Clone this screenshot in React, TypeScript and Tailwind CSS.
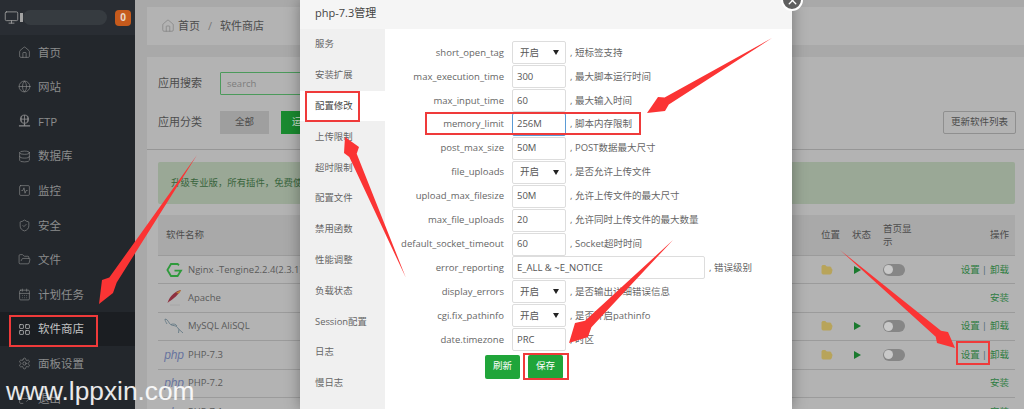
import React from "react";
import { House, Globe, Database, SquareActivity, ShieldCheck, FolderOpen, CalendarDays, LayoutGrid, Settings, LogOut, Monitor, X } from "lucide-react";

const FtpIcon = () => (
  <svg width="14" height="14" viewBox="0 0 14 14" fill="none" stroke="currentColor" strokeWidth="0.9">
    <circle cx="7" cy="5" r="4.4" />
    <path d="M2.6 5h8.8M7 .6v8.8M4.2 1.600C3.400 4 3.400 6.200 4.200 8.600M9.800 1.600c.8 2.400.8 4.600 0 7" />
    <path d="M7 9.500v2.200M1 12.200h12" strokeWidth="1.4" />
  </svg>
);

const navItems: [string, React.ReactNode][] = [
  ["首页", <House size={13} strokeWidth={1.2} />],
  ["网站", <Globe size={13} strokeWidth={1.2} />],
  ["FTP", <FtpIcon />],
  ["数据库", <Database size={13} strokeWidth={1.2} />],
  ["监控", <SquareActivity size={13} strokeWidth={1.2} />],
  ["安全", <ShieldCheck size={13} strokeWidth={1.2} />],
  ["文件", <FolderOpen size={13} strokeWidth={1.2} />],
  ["计划任务", <CalendarDays size={13} strokeWidth={1.2} />],
  ["软件商店", <LayoutGrid size={13} strokeWidth={1.4} />],
  ["面板设置", <Settings size={13} strokeWidth={1.2} />],
  ["退出", <LogOut size={13} strokeWidth={1.2} />],
];

const tabs = ["服务", "安装扩展", "配置修改", "上传限制", "超时限制", "配置文件", "禁用函数", "性能调整", "负载状态", "Session配置", "日志", "慢日志"];

type Row = { label: string; value: string; note: string; select?: boolean; wide?: boolean; active?: boolean };
const rows: Row[] = [
  { label: "short_open_tag", value: "开启", note: ", 短标签支持", select: true },
  { label: "max_execution_time", value: "300", note: ", 最大脚本运行时间" },
  { label: "max_input_time", value: "60", note: ", 最大输入时间" },
  { label: "memory_limit", value: "256M", note: ", 脚本内存限制", active: true },
  { label: "post_max_size", value: "50M", note: ", POST数据最大尺寸" },
  { label: "file_uploads", value: "开启", note: ", 是否允许上传文件", select: true },
  { label: "upload_max_filesize", value: "50M", note: ", 允许上传文件的最大尺寸" },
  { label: "max_file_uploads", value: "20", note: ", 允许同时上传文件的最大数量" },
  { label: "default_socket_timeout", value: "60", note: ", Socket超时时间" },
  { label: "error_reporting", value: "E_ALL & ~E_NOTICE", note: ", 错误级别", wide: true },
  { label: "display_errors", value: "开启", note: ", 是否输出详细错误信息", select: true },
  { label: "cgi.fix_pathinfo", value: "开启", note: ", 是否开启pathinfo", select: true },
  { label: "date.timezone", value: "PRC", note: ", 时区" },
];

const NginxLogo = () => (
  <svg width="17" height="14" viewBox="0 0 17 14" fill="none" stroke="#2f9a3c" strokeWidth="1.8">
    <path d="M13 2.200 11.600 1H5L1.400 7 5 13h6.600L15 7.600H8.500" />
  </svg>
);
const ApacheLogo = () => (
  <svg width="17" height="18" viewBox="0 0 17 18" fill="none">
    <path d="M15 1C10 2 4 6 1.500 14 5 11 11 8 15 1Z" fill="#8e2f3e" />
    <path d="M15 1c-2 1-3.500 1.700-5 3l3 .5C14 3.500 14.500 2.300 15 1Z" fill="#b8813a" />
    <path d="M4 16h10" stroke="#a3a3a3" strokeWidth="0.8" />
  </svg>
);
const MysqlLogo = () => (
  <svg width="20" height="16" viewBox="0 0 20 16" fill="none" stroke="#5d7480" strokeWidth="0.8">
    <path d="M1 1c3 0 3.500 4 5.500 5.500S12 7 13.500 9.500 16 12 19 15M1 1c0 2 1 3 2 5M7 6.500C9 5.500 12 6 13 8M15 11l-.5 4" />
  </svg>
);
const PhpLogo = () => (
  <span className="font-['Liberation_Sans',sans-serif] italic text-[12px] leading-none tracking-[-0.2px] text-[#68739f]">php</span>
);

type Soft = { icon: React.ReactNode; name: string; on: boolean };
const software: Soft[] = [
  { icon: <NginxLogo />, name: "Nginx -Tengine2.2.4(2.3.1)", on: true },
  { icon: <ApacheLogo />, name: "Apache", on: false },
  { icon: <MysqlLogo />, name: "MySQL AliSQL", on: true },
  { icon: <PhpLogo />, name: "PHP-7.3", on: true },
  { icon: <PhpLogo />, name: "PHP-7.2", on: false },
  { icon: <PhpLogo />, name: "PHP-7.1", on: false },
];

const arrows = [
  "197,155 116.700,282.500 113,293 99,304 102,280 109.300,277.500",
  "406,278 356.700,153.800 359,147 345,137 344,153 349.300,157",
  "772,38 664.600,97.600 658,97 647,113 665,111 668.800,104.400",
  "673,240 591.400,327.200 588,337 569,343 575,323 585,320.800",
  "840,250 941,330.700 948,332 955,348 937,343 935.700,336.700",
];

const redBoxes = [
  "left-[9px] top-[315px] w-[89px] h-[32px]",
  "left-[305px] top-[91px] w-[55px] h-[31px]",
  "left-[425px] top-[112px] w-[216px] h-[23px]",
  "left-[523px] top-[353px] w-[46px] h-[27px]",
  "left-[956px] top-[341px] w-[34px] h-[24px]",
];

export default function App() {
  return (
    <div className="relative flex h-[409px] w-[1024px] overflow-hidden bg-[#a9a9a9] text-[11px] font-['Open_Sans','Noto_Sans_CJK_SC',sans-serif]">
      {/* Sidebar */}
      <aside className="flex w-[135px] shrink-0 flex-col bg-[#23272c] text-[#8b8c8d]">
        <div className="flex h-[35px] shrink-0 items-center bg-[#292d33] pl-[4px]">
          <Monitor size={15} strokeWidth={1.3} className="shrink-0 text-[#a3a3a3]" />
          <span className="ml-[1px] h-[9px] w-[3px] bg-[#a3a3a3]" />
          <span className="h-[15px] w-[84px] rounded-full bg-[#363b40]" />
          <span className="ml-[8px] flex h-[16px] w-[16px] items-center justify-center rounded-[4px] bg-[#c65a1c] text-[10px] font-bold text-[#e8d5c5]">0</span>
        </div>
        {navItems.map(([name, icon]) => (
          <div key={name} className={`flex h-[34.6px] shrink-0 items-center gap-[7px] pl-[18px] text-[11.5px] ${name === "软件商店" ? "bg-[#1b1e22] text-[#c2c2c2]" : ""}`}>
            <span className="flex w-[13px] justify-center">{icon}</span>
            <span>{name}</span>
          </div>
        ))}
      </aside>

      {/* Main */}
      <main className="flex min-w-0 flex-1 flex-col pl-[12px] pt-[7px] text-[#4c4c4c]">
        <div className="flex h-[38px] shrink-0 items-center bg-[#b3b3b3] pl-[14px] text-[11px]">
          <House size={14} strokeWidth={1.2} className="text-[#7f7f7f]" />
          <span className="ml-[3px]">首页</span>
          <span className="mx-[8px] text-[#777]">/</span>
          <span>软件商店</span>
        </div>

        <section className="mt-[12px] flex min-h-0 flex-1 flex-col bg-[#b3b3b3] pt-[15px]">
          <div className="flex h-[23px] shrink-0 items-center pl-[11px]">
            <span className="w-[62px]">应用搜索</span>
            <input readOnly placeholder="search" className="h-[23px] w-[250px] rounded-[1px] border border-[#4b9a5b] bg-[#b3b3b3] px-[6px] text-[9.5px] placeholder:text-[#7c7c7c]" />
          </div>
          <div className="mt-[16px] flex h-[23px] shrink-0 items-center pl-[11px] pr-[8px]">
            <span className="w-[62px]">应用分类</span>
            <span className="flex h-[23px] w-[49px] items-center justify-center bg-[#9f9f9f] text-[9.5px]">全部</span>
            <span className="ml-[12px] flex h-[23px] w-[60px] items-center justify-center bg-[#1a8a30] text-[9.5px] text-[#cfe0d0]">运行环境</span>
            <button className="ml-auto flex h-[23px] w-[73px] items-center justify-center rounded-[2px] border border-[#8f8f8f] text-[9.5px]">更新软件列表</button>
          </div>
          <div className="mt-[15px] h-px shrink-0 bg-[#969696]" />
          <div className="ml-[11px] mr-[9px] mt-[12px] flex h-[42px] shrink-0 items-center rounded-[2px] bg-[#9aa896] pl-[13px] text-[9.4px] text-[#38643c]">
            升级专业版，所有插件，免费使用
          </div>
          <div className="ml-[11px] mr-[9px] mt-[11px] flex flex-col">
            <div className="flex h-[41px] shrink-0 items-center border-b border-[#9b9b9b] bg-[#a9a9a9] text-[9.5px] text-[#4d4d4d]">
              <span className="flex-1 pl-[8px]">软件名称</span>
              <span className="w-[31px]">位置</span>
              <span className="w-[31px]">状态</span>
              <span className="w-[32px] leading-[13px]">首页显示</span>
              <span className="w-[100px] pr-[6px] text-right">操作</span>
            </div>
            {software.map((s) => (
              <div key={s.name} className="flex h-[28.4px] shrink-0 items-center border-b border-[#9b9b9b] text-[9.5px]">
                <span className="flex w-[30px] shrink-0 items-center justify-center pl-[2px]">{s.icon}</span>
                <span className="flex-1 text-[#5a5a5a]">{s.name}</span>
                {s.on ? (
                  <>
                    <span className="w-[31px]"><FolderOpen size={12} fill="#b8a45a" stroke="#b8a45a" /></span>
                    <span className="w-[31px] pl-[2px]">
                      <span className="block h-0 w-0 border-y-[4px] border-l-[7px] border-y-transparent border-l-[#1a7a2e]" />
                    </span>
                    <span className="w-[32px]">
                      <span className="flex h-[12px] w-[22px] items-center rounded-full bg-[#868686] pl-[1px]">
                        <span className="h-[9px] w-[9px] rounded-full bg-[#c9c9c9]" />
                      </span>
                    </span>
                  </>
                ) : null}
                <span className="w-[100px] pr-[6px] text-right text-[#2f7d42]">
                  {s.on ? <>设置<span className="ml-[2px] mr-[3px] text-[#4d6a70]">|</span>卸载</> : "安装"}
                </span>
              </div>
            ))}
          </div>
        </section>
      </main>

      {/* Modal */}
      <div className="absolute bottom-0 left-[300px] top-0 flex w-[492px] flex-col bg-white shadow-[0_0_14px_rgba(0,0,0,0.35)]">
        <div className="flex h-[29px] shrink-0 items-center bg-[#f5f5f5] pb-[3px] pl-[15px] text-[11px] text-[#444]">php-7.3管理</div>
        <div className="flex min-h-0 flex-1">
          <nav className="w-[85px] shrink-0 bg-[#f0f0f0] text-[9.4px] text-[#666]">
            {tabs.map((t) => (
              <div key={t} className={`flex h-[30.8px] items-center pl-[15px] ${t === "配置修改" ? "bg-white text-[#444]" : ""}`}>{t}</div>
            ))}
          </nav>
          <div className="flex flex-col pt-[12px] text-[#666]">
            {rows.map((r) => (
              <div key={r.label} className="flex h-[23.9px] items-center text-[9.5px]">
                <label className="w-[119px] whitespace-nowrap text-right">{r.label}</label>
                <div className={`relative ml-[8px] flex h-[23px] items-center rounded-[2px] border bg-white pl-[4px] text-[9.5px] text-[#555] ${r.wide ? "w-[193px]" : "w-[54px]"} ${r.active ? "border-[#5b9bd5]" : "border-[#ddd]"} ${r.select ? "pl-[7px]" : ""}`}>
                  {r.value}
                  {r.select ? (
                    <span className="absolute right-[6px] top-[8px] h-0 w-0 border-x-[3px] border-t-[5px] border-x-transparent border-t-[#222]" />
                  ) : null}
                </div>
                <span className="ml-[4px] whitespace-nowrap">{r.note}</span>
              </div>
            ))}
            <div className="mt-[3px] flex gap-[8px] pl-[100px]">
              <button className="flex h-[24px] w-[35px] items-center justify-center rounded-[2px] bg-[#20a53a] text-[9.5px] text-white">刷新</button>
              <button className="flex h-[24px] w-[35px] items-center justify-center rounded-[2px] bg-[#20a53a] text-[9.5px] text-white">保存</button>
            </div>
          </div>
        </div>
      </div>

      {/* Close button of the modal */}
      <div className="absolute left-[781px] top-[-11px] flex h-[22px] w-[22px] items-center justify-center rounded-full border-2 border-white bg-[#5f5f5f] text-white">
        <X size={13} strokeWidth={2.5} />
      </div>

      {/* Annotations */}
      <svg className="pointer-events-none absolute inset-0" width="1024" height="409" viewBox="0 0 1024 409">
        {arrows.map((p) => (
          <polygon key={p} points={p} fill="#fb3434" />
        ))}
      </svg>
      {redBoxes.map((c) => (
        <div key={c} className={`pointer-events-none absolute border-2 border-[#ef3a3a] ${c}`} />
      ))}
      <div className="absolute left-[6px] top-[376px] whitespace-nowrap font-['Liberation_Sans',sans-serif] text-[26.3px] leading-[30px] text-white/90">www.lppxin.com</div>
    </div>
  );
}
